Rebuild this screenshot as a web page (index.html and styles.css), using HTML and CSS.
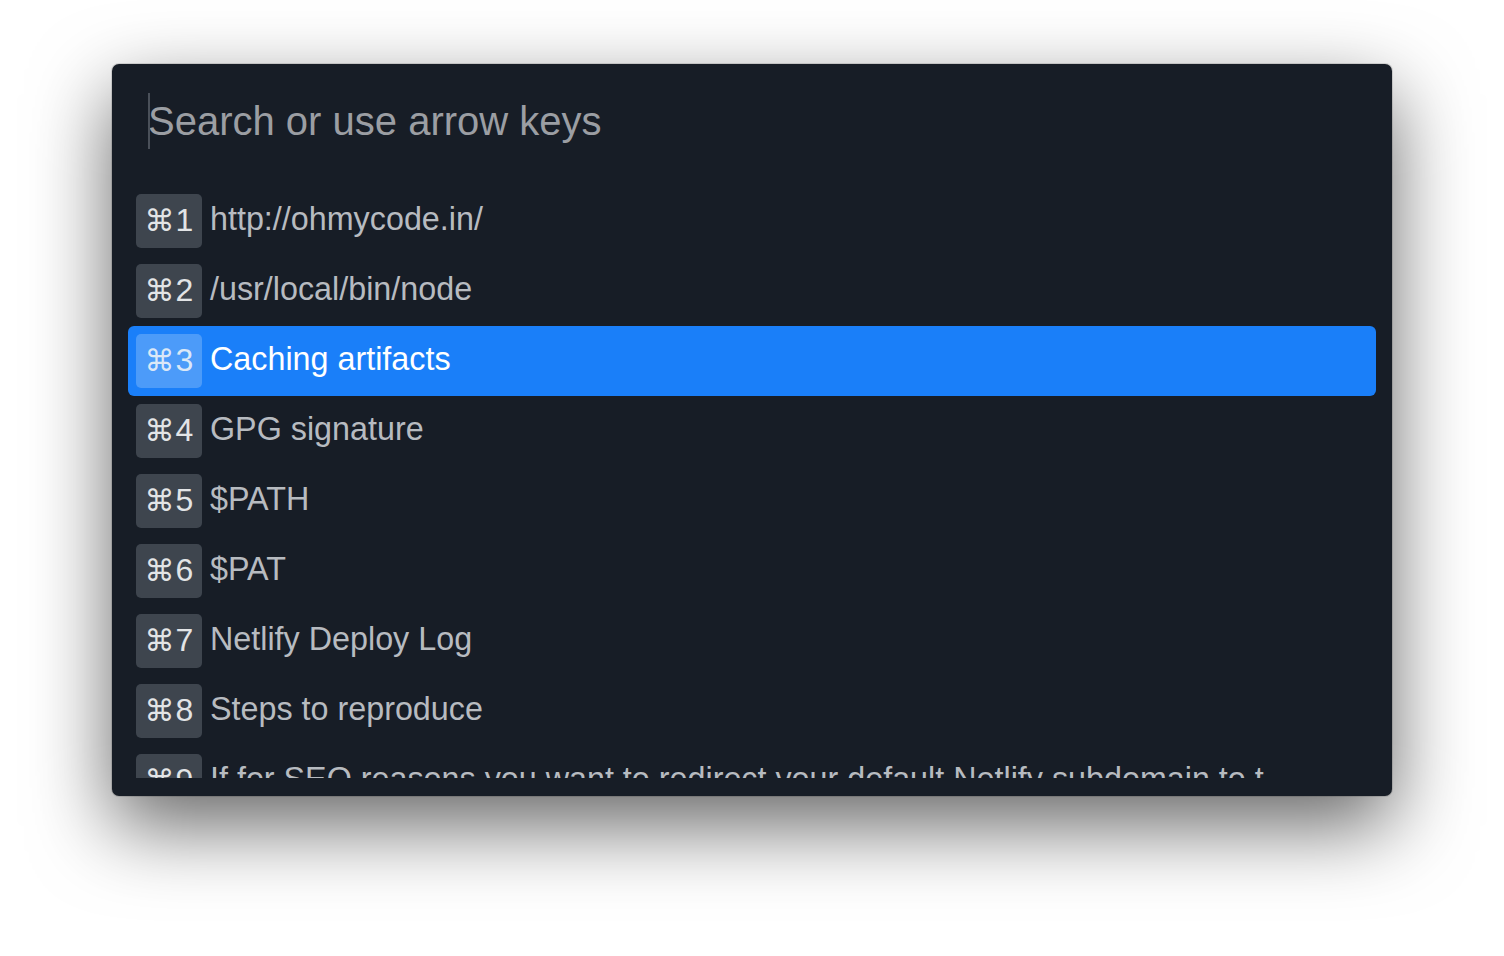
FILE: index.html
```html
<!DOCTYPE html>
<html>
<head>
<meta charset="utf-8">
<link rel="stylesheet" href="styles.css">
</head>
<body>
<div class="stage">
  <div class="palette">
    <div class="search">
      <div class="search-input"><span class="placeholder">Search or use arrow keys</span></div>
    </div>
    <div class="list">
      <div class="item"><span class="badge"><span class="cmd">⌘</span>1</span><span class="label">http://ohmycode.in/</span></div>
      <div class="item"><span class="badge"><span class="cmd">⌘</span>2</span><span class="label">/usr/local/bin/node</span></div>
      <div class="item active"><span class="badge"><span class="cmd">⌘</span>3</span><span class="label">Caching artifacts</span></div>
      <div class="item"><span class="badge"><span class="cmd">⌘</span>4</span><span class="label">GPG signature</span></div>
      <div class="item"><span class="badge"><span class="cmd">⌘</span>5</span><span class="label">$PATH</span></div>
      <div class="item"><span class="badge"><span class="cmd">⌘</span>6</span><span class="label">$PAT</span></div>
      <div class="item"><span class="badge"><span class="cmd">⌘</span>7</span><span class="label">Netlify Deploy Log</span></div>
      <div class="item"><span class="badge"><span class="cmd">⌘</span>8</span><span class="label">Steps to reproduce</span></div>
      <div class="item"><span class="badge"><span class="cmd">⌘</span>9</span><span class="label">If for SEO reasons you want to redirect your default Netlify subdomain to t</span></div>
    </div>
  </div>
</div>
</body>
</html>
```
FILE: styles.css
```css
html, body {
  margin: 0;
  padding: 0;
  background: #ffffff;
}
body {
  font-family: "Liberation Sans", Arial, "DejaVu Sans", sans-serif;
}
.stage {
  width: 1504px;
  height: 956px;
  padding: 64px 112px 0 112px;
  box-sizing: border-box;
}
.palette {
  width: 1280px;
  height: 732px;
  box-sizing: border-box;
  background: #171d26;
  border-radius: 7px;
  padding: 16px 16px 18px 16px;
  box-shadow: 0 0 0 1px rgba(0,0,0,0.12), 0 30px 80px rgba(0,0,0,0.6);
  display: flex;
  flex-direction: column;
}
.search {
  height: 106px;
  box-sizing: border-box;
  padding: 13px 20px 0 20px;
}
.search-input {
  position: relative;
  height: 56px;
  line-height: 56px;
  font-size: 40px;
  color: #9b9ea3;
}
.search-input::before {
  content: "";
  position: absolute;
  left: 0;
  top: 0;
  width: 1.5px;
  height: 56px;
  background: #4a5059;
}
.list {
  height: 592px;
  overflow: hidden;
  display: flex;
  flex-direction: column;
}
.item {
  flex: none;
  height: 70px;
  box-sizing: border-box;
  padding: 8px;
  display: flex;
  align-items: center;
  gap: 8px;
  border-radius: 6px;
  color: #b7bbc0;
  font-size: 32.3px;
}
.item.active {
  background: #1a7ff9;
  color: #ffffff;
}
.badge {
  flex: none;
  width: 66px;
  height: 54px;
  box-sizing: border-box;
  border-radius: 5px;
  background: #3e454e;
  color: #e2e4e6;
  font-size: 32px;
  font-family: "Liberation Sans", "DejaVu Sans", sans-serif;
  display: flex;
  align-items: center;
  justify-content: center;
  padding-bottom: 2px;
}
.cmd {
  font-family: "DejaVu Sans", sans-serif;
  font-size: 30px;
  margin-right: 1px;
}
.item.active .badge {
  background: #4c9bf9;
  color: #dbe8f7;
}
.label {
  white-space: nowrap;
  line-height: 54px;
  margin-top: -4px;
}
```
